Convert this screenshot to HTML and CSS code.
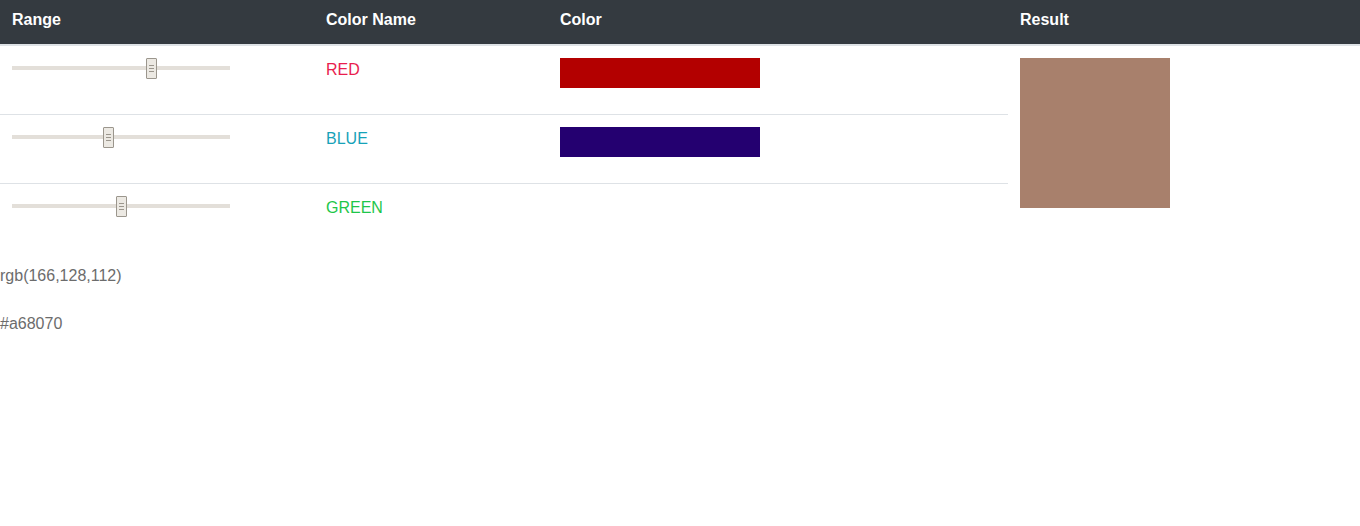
FILE: index.html
```html
<!DOCTYPE html>
<html>
<head>
<meta charset="utf-8">
<link rel="stylesheet" href="styles.css">
</head>
<body>
<table class="mixer">
  <colgroup>
    <col class="c-range"><col class="c-name"><col class="c-color"><col class="c-result">
  </colgroup>
  <thead>
    <tr><th>Range</th><th>Color Name</th><th>Color</th><th>Result</th></tr>
  </thead>
  <tbody>
    <tr>
      <td><div class="slider"><div class="track"></div><div class="thumb" style="left:134px"></div></div></td>
      <td class="name red">RED</td>
      <td><div class="swatch" style="background:#b30000"></div></td>
      <td class="result" rowspan="3"><div class="result-box" style="background:#a8806c"></div></td>
    </tr>
    <tr>
      <td><div class="slider"><div class="track"></div><div class="thumb" style="left:91px"></div></div></td>
      <td class="name blue">BLUE</td>
      <td><div class="swatch" style="background:#240070"></div></td>
    </tr>
    <tr>
      <td><div class="slider"><div class="track"></div><div class="thumb" style="left:104px"></div></div></td>
      <td class="name green">GREEN</td>
      <td></td>
    </tr>
  </tbody>
</table>
<p class="out out-rgb">rgb(166,128,112)</p>
<p class="out out-hex">#a68070</p>
</body>
</html>
```
FILE: styles.css
```css
html, body {
  margin: 0;
  padding: 0;
  background: #fff;
  font-family: "Liberation Sans", Arial, sans-serif;
  font-size: 16px;
  line-height: 24px;
  color: #212529;
}
.mixer {
  width: 100%;
  border-collapse: collapse;
  table-layout: fixed;
}
.c-range { width: 314px; }
.c-name { width: 234px; }
.c-color { width: 460px; }
.c-result { width: auto; }
.mixer th {
  background: #343a40;
  color: #fff;
  font-weight: bold;
  text-align: left;
  padding: 8px 12px 12px;
  border-bottom: 2px solid #dee2e6;
  vertical-align: top;
}
.mixer td {
  padding: 12px;
  height: 44px;
  vertical-align: top;
  border-top: 1px solid #dee2e6;
}
.mixer tbody tr:first-child td { border-top: 0; }
.mixer td.result { border-top: 0; }
.slider {
  position: relative;
  box-sizing: border-box;
  width: 218px;
  height: 44px;
  padding-top: 8px;
}
.track {
  height: 4px;
  background: #e3dfd9;
}
.thumb {
  position: absolute;
  top: 0;
  width: 9px;
  height: 19px;
  border: 1px solid #9b968d;
  border-radius: 1px;
  background:
    linear-gradient(#9b968d, #9b968d) 2px 6px / 5px 1px no-repeat,
    linear-gradient(#9b968d, #9b968d) 2px 9px / 5px 1px no-repeat,
    linear-gradient(#9b968d, #9b968d) 2px 12px / 5px 1px no-repeat,
    #ece9e3;
}
.name { font-weight: normal; }
.red { color: #e91e4e; }
.blue { color: #17a2b8; }
.green { color: #1ec64a; }
.swatch {
  width: 200px;
  height: 30px;
}
.result-box {
  width: 150px;
  height: 150px;
}
.out {
  margin: 0;
  color: #6c6c6c;
}
.out-rgb { margin-top: 12px; }
.out-hex { margin-top: 24px; }
```
